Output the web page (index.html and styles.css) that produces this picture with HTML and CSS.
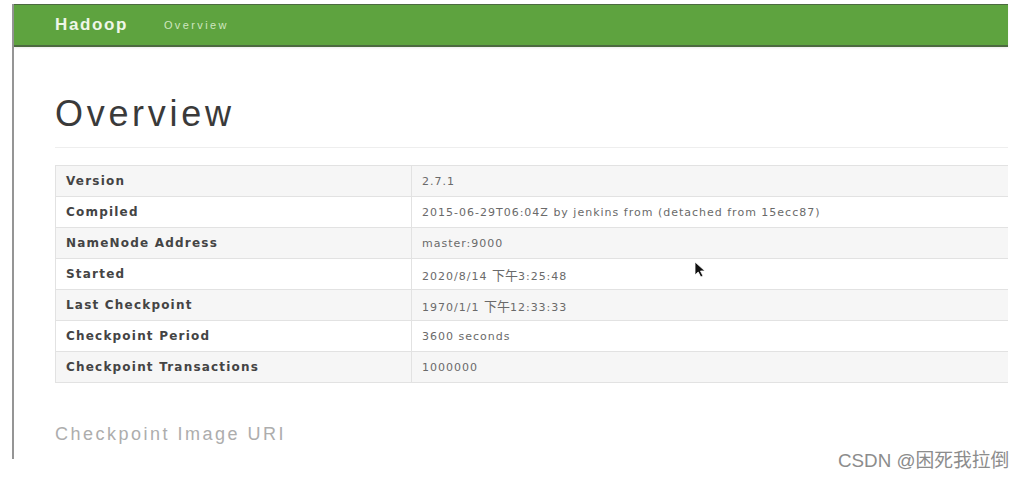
FILE: index.html
```html
<!DOCTYPE html>
<html lang="zh">
<head>
    <meta charset="UTF-8">
    <title>Namenode information</title>
    <link rel="stylesheet" href="styles.css">
</head>
<body>
    <div class="frame">
        <header class="navbar">
            <span class="brand">Hadoop</span>
            <span class="nav-link">Overview</span>
        </header>

        <div class="content">
            <h1 class="page-title">Overview</h1>

            <table class="info-table">
                <tr><th>Version</th><td>2.7.1</td></tr>
                <tr><th>Compiled</th><td>2015-06-29T06:04Z by jenkins from (detached from 15ecc87)</td></tr>
                <tr><th>NameNode Address</th><td>master:9000</td></tr>
                <tr><th>Started</th><td>2020/8/14 <span class="cjk">下午</span>3:25:48</td></tr>
                <tr><th>Last Checkpoint</th><td>1970/1/1 <span class="cjk">下午</span>12:33:33</td></tr>
                <tr><th>Checkpoint Period</th><td>3600 seconds</td></tr>
                <tr><th>Checkpoint Transactions</th><td>1000000</td></tr>
            </table>

            <h2 class="section-title">Checkpoint Image URI</h2>
        </div>
    </div>

    <!-- mouse pointer captured in the shot -->
    <svg class="cursor" width="13" height="17" viewBox="0 0 13 17">
        <path d="M1 1 L1 14 L4.2 11 L6.8 16 L9 15 L6.5 10 L11 10 Z" fill="#111" stroke="#fff" stroke-width="0.8"/>
    </svg>

    <div class="watermark">CSDN @困死我拉倒</div>
</body>
</html>
```

FILE: styles.css
```css
:root {
    --green: #5ea33f;
    --green-dark: #4c6a40;
    --text: #3a3a3a;
    --muted: #666;
    --line: #e2e2e2;
}

body {
    margin: 0;
    background: #fff;
    font-family: 'Liberation Sans', Arial, sans-serif;
    position: relative;
    height: 479px;
    overflow: hidden;
}

.frame {
    margin: 4px 0 0 12px;
    width: 996px;
    height: 455px;
    border-left: 2px solid #959595;
    box-sizing: border-box;
}

.navbar {
    display: flex;
    align-items: center;
    height: 43px;
    box-sizing: border-box;
    background: var(--green);
    border-top: 1px solid var(--green-dark);
    border-bottom: 2px solid var(--green-dark);
    padding-left: 41px;
    box-shadow: 0 1px 2px rgba(0, 0, 0, 0.08);
}

.brand {
    color: #eef6e8;
    font-weight: bold;
    font-size: 17px;
    letter-spacing: 1.6px;
}

.nav-link {
    margin-left: 36px;
    color: #cfe6bf;
    font-size: 11px;
    letter-spacing: 2.4px;
}

.content {
    padding: 47px 0 0 41px;
}

.page-title {
    margin: 0 0 17px;
    padding-bottom: 13px;
    border-bottom: 1px solid #eeeeee;
    font-weight: normal;
    font-size: 36px;
    line-height: 40px;
    letter-spacing: 3.7px;
    color: var(--text);
}

.info-table {
    width: 100%;
    border-collapse: collapse;
    font-family: 'DejaVu Sans', 'Noto Sans CJK SC', sans-serif;
}

.info-table tr {
    height: 31px;
}

.info-table tr:nth-child(odd) {
    background: #f6f6f6;
}

.info-table th,
.info-table td {
    border: 1px solid var(--line);
    padding: 0 10px;
    text-align: left;
    vertical-align: middle;
}

.info-table th {
    width: 335px;
    font-size: 12px;
    font-weight: bold;
    letter-spacing: 1.2px;
    color: #444;
}

.info-table td {
    font-size: 11px;
    letter-spacing: 1px;
    color: #6a6a6a;
    border-right: none;
}

.cjk {
    font-family: 'Noto Sans CJK SC', sans-serif;
    font-size: 13px;
    letter-spacing: 0;
}

.section-title {
    margin: 41px 0 0;
    font-weight: normal;
    font-size: 18px;
    line-height: 20px;
    letter-spacing: 2.5px;
    color: #adadad;
}

.cursor {
    position: absolute;
    left: 694px;
    top: 261px;
}

.watermark {
    position: absolute;
    left: 838px;
    top: 450px;
    font-family: 'Liberation Sans', 'Noto Sans CJK SC', sans-serif;
    font-size: 18.8px;
    line-height: 22px;
    color: #8c8c8c;
}
```
